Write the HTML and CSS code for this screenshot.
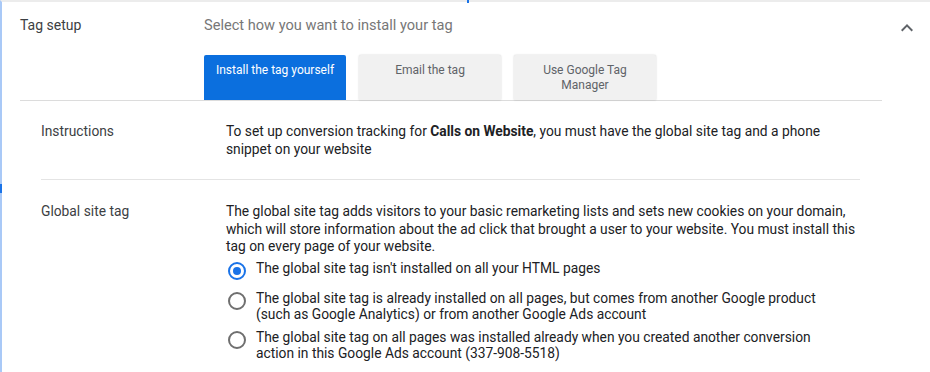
FILE: index.html
```html
<!DOCTYPE html>
<html lang="en">
<head>
    <meta charset="UTF-8">
    <title>Tag setup</title>
    <link rel="stylesheet" href="styles.css">
</head>
<body>
    <div class="panel">
        <span class="top-mark"></span>
        <span class="side-mark"></span>

        <!-- Header -->
        <div class="header">
            <div class="title">Tag setup</div>
            <div class="subtitle">Select how you want to install your tag</div>
            <svg class="chevron" width="24" height="24" viewBox="0 0 24 24">
                <path d="M7.41 15.41L12 10.83l4.59 4.58L18 14l-6-6-6 6z" fill="#5f6368"/>
            </svg>
        </div>

        <!-- Install method tabs -->
        <div class="tabs">
            <div class="tab active">Install the tag yourself</div>
            <div class="tab">Email the tag</div>
            <div class="tab">Use Google Tag<br>Manager</div>
        </div>
        <div class="divider"></div>

        <div class="content">
            <div class="row">
                <div class="label">Instructions</div>
                <div class="value">To set up conversion tracking for <strong>Calls on Website</strong>, you must have the global site tag and a phone snippet on your website</div>
            </div>
            <div class="row-divider"></div>
            <div class="row">
                <div class="label">Global site tag</div>
                <div class="value">
                    <p class="desc">The global site tag adds visitors to your basic remarketing lists and sets new cookies on your domain, which will store information about the ad click that brought a user to your website. You must install this tag on every page of your website.</p>
                    <div class="option">
                        <span class="radio checked"></span>
                        <span class="option-text">The global site tag isn't installed on all your HTML pages</span>
                    </div>
                    <div class="option">
                        <span class="radio"></span>
                        <span class="option-text">The global site tag is already installed on all pages, but comes from another Google product (such as Google Analytics) or from another Google Ads account</span>
                    </div>
                    <div class="option">
                        <span class="radio"></span>
                        <span class="option-text">The global site tag on all pages was installed already when you created another conversion action in this Google Ads account (337-908-5518)</span>
                    </div>
                </div>
            </div>
        </div>
    </div>
</body>
</html>
```

FILE: styles.css
```css
body {
    margin: 0;
    font-family: Roboto, "Liberation Sans", sans-serif;
    background: white;
    color: #202124;
    overflow: hidden;
}
.panel {
    position: relative;
    height: 372px;
    border-left: 2px solid #a9c9f7;
    border-top: 2px solid #ececec;
    box-sizing: border-box;
}
.top-mark {
    position: absolute;
    top: -2px;
    left: 465px;
    width: 2px;
    height: 3px;
    background: #1a73e8;
}
.side-mark {
    position: absolute;
    left: -2px;
    top: 182px;
    width: 2px;
    height: 9px;
    background: #1a73e8;
}
.header {
    display: flex;
    align-items: center;
    padding: 13px 11px 0 18px;
    height: 20px;
}
.title {
    width: 184px;
    font-size: 14px;
    color: #3c4043;
}
.subtitle {
    flex: 1;
    font-size: 14.6px;
    color: #777;
}
.chevron {
    margin-top: 6px;
}
.tabs {
    display: flex;
    gap: 13px;
    margin: 20px 0 0 202px;
}
.tab {
    width: 142px;
    height: 45px;
    box-sizing: border-box;
    padding-top: 8px;
    background: #f1f1f1;
    color: #5f6368;
    font-size: 12px;
    line-height: 15px;
    text-align: center;
    border-radius: 2px 2px 0 0;
    box-shadow: 0 0 2px rgba(0,0,0,0.2);
}
.tab.active {
    background: #0b6fde;
    color: white;
    box-shadow: none;
}
.divider {
    height: 1px;
    background: #dcdcdc;
    margin: 0 48px 0 18px;
}
.content {
    padding-left: 39px;
}
.row {
    display: flex;
    font-size: 13.8px;
    line-height: 17.5px;
}
.row:first-child {
    padding: 21px 0 21px;
    line-height: 18px;
}
.label {
    width: 185px;
    flex-shrink: 0;
    color: #3c4043;
}
.value {
    width: 636px;
}
.row-divider {
    height: 1px;
    background: #e4e4e4;
    margin-right: 70px;
}
.row-divider + .row {
    padding-top: 23px;
}
.desc {
    margin: 0 0 4px;
}
.option {
    display: flex;
    align-items: flex-start;
    min-height: 24px;
    margin-bottom: 6px;
}
.radio {
    width: 18px;
    height: 18px;
    box-sizing: border-box;
    border: 2px solid #6f6f6f;
    border-radius: 50%;
    margin: 2px 10px 0 2px;
    flex-shrink: 0;
    position: relative;
}
.radio.checked {
    border-color: #1a73e8;
}
.radio.checked::after {
    content: "";
    position: absolute;
    left: 3px;
    top: 3px;
    width: 8px;
    height: 8px;
    border-radius: 50%;
    background: #1a73e8;
}
.option-text {
    max-width: 575px;
    line-height: 16.5px;
}
```
